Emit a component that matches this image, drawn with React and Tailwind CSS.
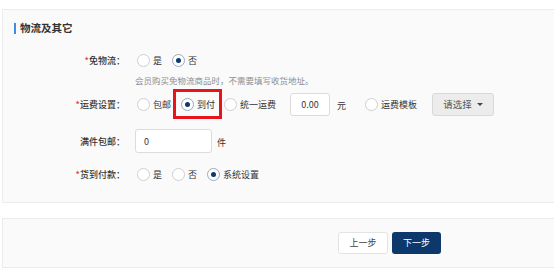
import { useState } from "react";

const FONT = { fontFamily: '"Noto Sans CJK SC", "Noto Sans", sans-serif' };

function Radio({ checked, label, onClick, className = "" }) {
  return (
    <span
      onClick={onClick}
      className={`inline-flex items-center cursor-pointer ${className}`}
    >
      <span
        className={`w-[13px] h-[13px] rounded-full border bg-white flex items-center justify-center shrink-0 ${
          checked ? "border-[#9aa9bf]" : "border-[#cfcfcf]"
        }`}
      >
        {checked && <span className="w-[5px] h-[5px] rounded-full bg-[#0d3a6c]" />}
      </span>
      <span className="ml-[3px] text-[9px] text-[#333] leading-none">{label}</span>
    </span>
  );
}

function Label({ req, children }) {
  return (
    <div className="w-[122px] shrink-0 text-right text-[9px] font-medium text-[#333] leading-none">
      {req && <span className="text-[#e4393c]">*</span>}
      {children}：
    </div>
  );
}

export default function App() {
  const [free, setFree] = useState("no");
  const [fee, setFee] = useState("cod");
  const [pay, setPay] = useState("sys");

  return (
    <div className="w-[554px] h-[279px] bg-white overflow-hidden" style={FONT}>
      <div className="ml-[2px] mt-[9px] w-[560px] border border-[#ececec] bg-[#fafafa] pb-[18px]">
        <div className="pl-[11px] pt-[11px] flex items-center h-[25px]">
          <span className="w-[2px] h-[11px] bg-[#3a8ee6]" />
          <span className="ml-[4px] text-[10.5px] font-bold text-[#333] leading-none">物流及其它</span>
        </div>

        <div className="mt-[15px] h-[20px] flex items-center">
          <Label req>免物流</Label>
          <div className="ml-[12px] flex items-center">
            <Radio checked={free === "yes"} label="是" onClick={() => setFree("yes")} />
            <Radio checked={free === "no"} label="否" onClick={() => setFree("no")} className="ml-[10px]" />
          </div>
        </div>
        <div className="h-[12px] mt-[4px] pl-[132px] flex items-center text-[8.5px] text-[#8f8f8f] leading-none">
          会员购买免物流商品时，不需要填写收货地址。
        </div>

        <div className="mt-[3px] h-[30px] flex items-center">
          <Label req>运费设置</Label>
          <div className="ml-[12px] flex items-center">
            <Radio checked={fee === "free"} label="包邮" onClick={() => setFee("free")} />
            <div className="ml-[2px] h-[30px] w-[49px] border-[3px] border-[#e8131b] flex items-center pl-[5px]">
              <Radio checked={fee === "cod"} label="到付" onClick={() => setFee("cod")} />
            </div>
            <Radio checked={fee === "flat"} label="统一运费" onClick={() => setFee("flat")} className="ml-[2px]" />
            <input
              defaultValue="0.00"
              className="ml-[14px] w-[40px] h-[23px] border border-[#dcdcdc] rounded-[3px] bg-white text-center text-[9px] text-[#333] outline-none"
            />
            <span className="ml-[7px] text-[9px] text-[#333] mt-[4px]">元</span>
            <Radio checked={fee === "tpl"} label="运费模板" onClick={() => setFee("tpl")} className="ml-[19px]" />
            <button className="ml-[15px] w-[62px] h-[23px] border border-[#d9d9d9] rounded-[3px] bg-[#ececec] flex items-center justify-center text-[9.5px] text-[#555]">
              请选择
              <svg width="6" height="3" viewBox="0 0 6 3" className="ml-[5px]">
                <path d="M0 0h6L3 3z" fill="#444" />
              </svg>
            </button>
          </div>
        </div>

        <div className="mt-[10px] h-[24px] flex items-center">
          <Label>满件包邮</Label>
          <div className="ml-[10px] flex items-center">
            <input
              defaultValue="0"
              className="w-[77px] h-[24px] border border-[#dcdcdc] rounded-[3px] bg-white pl-[8px] text-[9px] text-[#333] outline-none"
            />
            <span className="ml-[5px] text-[9px] text-[#333] mt-[4px]">件</span>
          </div>
        </div>

        <div className="mt-[11px] h-[20px] flex items-center">
          <Label req>货到付款</Label>
          <div className="ml-[12px] flex items-center">
            <Radio checked={pay === "yes"} label="是" onClick={() => setPay("yes")} />
            <Radio checked={pay === "no"} label="否" onClick={() => setPay("no")} className="ml-[10px]" />
            <Radio checked={pay === "sys"} label="系统设置" onClick={() => setPay("sys")} className="ml-[10px]" />
          </div>
        </div>
      </div>

      <div className="ml-[2px] mt-[15px] w-[560px] h-[50px] border border-[#ececec] bg-[#fafafa] flex items-center pl-[335px] gap-[4px]">
        <button className="w-[50px] h-[22px] border border-[#e3e3e3] rounded-[3px] bg-white text-[9px] text-[#444]">
          上一步
        </button>
        <button className="w-[49px] h-[22px] rounded-[3px] bg-[#0c386b] text-[9px] text-white">
          下一步
        </button>
      </div>
    </div>
  );
}
